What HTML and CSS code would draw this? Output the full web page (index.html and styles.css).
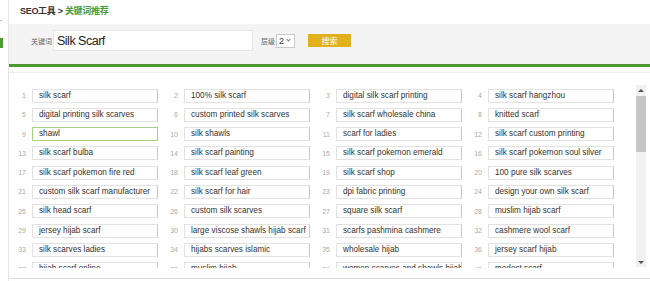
FILE: index.html
```html
<!DOCTYPE html>
<html>
<head>
    <meta charset="UTF-8">
    <title>关键词推荐</title>
    <link rel="stylesheet" href="styles.css">
</head>
<body>
    <div class="side">
        <div class="tick"></div>
        <div class="on"></div>
    </div>
    <div class="main">
        <div class="crumb">SEO工具 &gt; <span>关键词推荐</span></div>
        <div class="search">
            <div class="bar">
                <label class="lbl">关键词</label>
                <input class="kw-input" type="text" value="Silk Scarf">
                <label class="lbl lbl-level">层级</label>
                <div class="level-sel">2<i></i></div>
                <button class="btn">搜索</button>
            </div>
        </div>
        <div class="list">
            <div class="grid">
                <div class="cell"><span class="num">1</span><div class="kw">silk scarf</div></div>
                <div class="cell"><span class="num">2</span><div class="kw">100% silk scarf</div></div>
                <div class="cell"><span class="num">3</span><div class="kw">digital silk scarf printing</div></div>
                <div class="cell"><span class="num">4</span><div class="kw">silk scarf hangzhou</div></div>
                <div class="cell"><span class="num">5</span><div class="kw">digital printing silk scarves</div></div>
                <div class="cell"><span class="num">6</span><div class="kw">custom printed silk scarves</div></div>
                <div class="cell"><span class="num">7</span><div class="kw">silk scarf wholesale china</div></div>
                <div class="cell"><span class="num">8</span><div class="kw">knitted scarf</div></div>
                <div class="cell"><span class="num">9</span><div class="kw on">shawl</div></div>
                <div class="cell"><span class="num">10</span><div class="kw">silk shawls</div></div>
                <div class="cell"><span class="num">11</span><div class="kw">scarf for ladies</div></div>
                <div class="cell"><span class="num">12</span><div class="kw">silk scarf custom printing</div></div>
                <div class="cell"><span class="num">13</span><div class="kw">silk scarf bulba</div></div>
                <div class="cell"><span class="num">14</span><div class="kw">silk scarf painting</div></div>
                <div class="cell"><span class="num">15</span><div class="kw">silk scarf pokemon emerald</div></div>
                <div class="cell"><span class="num">16</span><div class="kw">silk scarf pokemon soul silver</div></div>
                <div class="cell"><span class="num">17</span><div class="kw">silk scarf pokemon fire red</div></div>
                <div class="cell"><span class="num">18</span><div class="kw">silk scarf leaf green</div></div>
                <div class="cell"><span class="num">19</span><div class="kw">silk scarf shop</div></div>
                <div class="cell"><span class="num">20</span><div class="kw">100 pure silk scarves</div></div>
                <div class="cell"><span class="num">21</span><div class="kw">custom silk scarf manufacturer</div></div>
                <div class="cell"><span class="num">22</span><div class="kw">silk scarf for hair</div></div>
                <div class="cell"><span class="num">23</span><div class="kw">dpi fabric printing</div></div>
                <div class="cell"><span class="num">24</span><div class="kw">design your own silk scarf</div></div>
                <div class="cell"><span class="num">25</span><div class="kw">silk head scarf</div></div>
                <div class="cell"><span class="num">26</span><div class="kw">custom silk scarves</div></div>
                <div class="cell"><span class="num">27</span><div class="kw">square silk scarf</div></div>
                <div class="cell"><span class="num">28</span><div class="kw">muslim hijab scarf</div></div>
                <div class="cell"><span class="num">29</span><div class="kw">jersey hijab scarf</div></div>
                <div class="cell"><span class="num">30</span><div class="kw">large viscose shawls hijab scarf</div></div>
                <div class="cell"><span class="num">31</span><div class="kw">scarfs pashmina cashmere</div></div>
                <div class="cell"><span class="num">32</span><div class="kw">cashmere wool scarf</div></div>
                <div class="cell"><span class="num">33</span><div class="kw">silk scarves ladies</div></div>
                <div class="cell"><span class="num">34</span><div class="kw">hijabs scarves islamic</div></div>
                <div class="cell"><span class="num">35</span><div class="kw">wholesale hijab</div></div>
                <div class="cell"><span class="num">36</span><div class="kw">jersey scarf hijab</div></div>
                <div class="cell"><span class="num">37</span><div class="kw">hijab scarf online</div></div>
                <div class="cell"><span class="num">38</span><div class="kw">muslim hijab</div></div>
                <div class="cell"><span class="num">39</span><div class="kw">women scarves and shawls hijab</div></div>
                <div class="cell"><span class="num">40</span><div class="kw">modest scarf</div></div>
            </div>
            <div class="scrollbar">
                <i class="up"></i>
                <div class="thumb"></div>
                <i class="down"></i>
            </div>
        </div>
    </div>
</body>
</html>
```

FILE: styles.css
```css
* {
    padding: 0;
    margin: 0;
    box-sizing: border-box;
}
body {
    width: 650px;
    height: 281px;
    overflow: hidden;
    display: flex;
    background: #fff;
    font-family: "Liberation Sans", "Noto Sans CJK SC", sans-serif;
    color: #333;
}
.side {
    width: 9px;
    border-right: 1px solid #e4e4e4;
    padding-top: 20px;
}
.side .tick {
    width: 2px;
    height: 1px;
    background: #bbb;
}
.side .on {
    width: 3px;
    height: 10px;
    margin-top: 17px;
    background: #4b9a32;
}
.main {
    flex: 1;
    display: flex;
    flex-direction: column;
}
.crumb {
    height: 24px;
    padding-left: 11px;
    line-height: 22px;
    font-size: 9px;
    font-weight: bold;
    letter-spacing: -0.3px;
    color: #333;
}
.crumb span {
    color: #4b9a32;
}
.search {
    height: 43px;
    padding: 6px 0 0 22px;
    background: #f4f4f4;
    border-bottom: 3px solid #4b9a32;
}
.bar {
    display: flex;
    align-items: center;
    height: 21px;
}
.lbl {
    font-size: 7px;
    color: #666;
    margin-right: 1px;
    font-family: "Noto Sans CJK SC", sans-serif;
}
.lbl-level {
    margin-left: 8px;
    margin-right: 1px;
}
.kw-input {
    width: 200px;
    height: 21px;
    border: 1px solid #e6e6e6;
    background: #fff;
    padding-left: 3px;
    font-family: inherit;
    font-size: 12.5px;
    letter-spacing: -0.5px;
    color: #222;
    outline: none;
}
.level-sel {
    width: 19px;
    height: 14px;
    border: 1px solid #c9c9c9;
    background: #fff;
    font-size: 9px;
    line-height: 12px;
    padding-left: 2px;
    display: flex;
    align-items: center;
    gap: 3px;
}
.level-sel i {
    width: 3px;
    height: 3px;
    border-right: 1px solid #777;
    border-bottom: 1px solid #777;
    transform: rotate(45deg);
    margin-top: -2px;
}
.btn {
    width: 43px;
    height: 13px;
    margin-left: 13px;
    border: none;
    background: #e0b11d;
    color: #fff;
    font-size: 8px;
    line-height: 13px;
    font-family: "Noto Sans CJK SC", sans-serif;
}
.list {
    height: 207px;
    margin-top: 5px;
    padding: 12px 0 8px 3px;
    border-top: 1px solid #ececec;
    border-bottom: 1px solid #ddd;
    display: flex;
    align-items: flex-start;
}
.grid {
    width: 608px;
    height: 183px;
    overflow: hidden;
    padding-top: 3.5px;
    display: grid;
    grid-template-columns: repeat(4, 152px);
    grid-auto-rows: 14px;
    row-gap: 5.3px;
    align-content: start;
}
.cell {
    display: flex;
    align-items: center;
}
.num {
    width: 14px;
    margin-right: 6px;
    text-align: right;
    font-size: 7px;
    color: #aaa;
}
.kw {
    width: 126px;
    height: 14px;
    border: 1px solid #e2e2e2;
    border-right-color: #c9c9c9;
    padding-left: 6px;
    font-size: 8.2px;
    line-height: 12px;
    color: #333;
    white-space: nowrap;
    overflow: hidden;
}
.kw.on {
    border-color: #a9cf86;
}
.scrollbar {
    width: 10px;
    height: 182px;
    margin-left: 16px;
    background: #f1f1f1;
    display: flex;
    flex-direction: column;
    align-items: center;
}
.scrollbar .up {
    width: 0;
    border-left: 3px solid transparent;
    border-right: 3px solid transparent;
    border-bottom: 3px solid #555;
    margin-top: 4px;
}
.scrollbar .thumb {
    width: 10px;
    height: 56px;
    margin-top: 4px;
    background: #c6c6c6;
}
.scrollbar .down {
    width: 0;
    margin-top: auto;
    margin-bottom: 3px;
    border-left: 3px solid transparent;
    border-right: 3px solid transparent;
    border-top: 3px solid #555;
}
```
